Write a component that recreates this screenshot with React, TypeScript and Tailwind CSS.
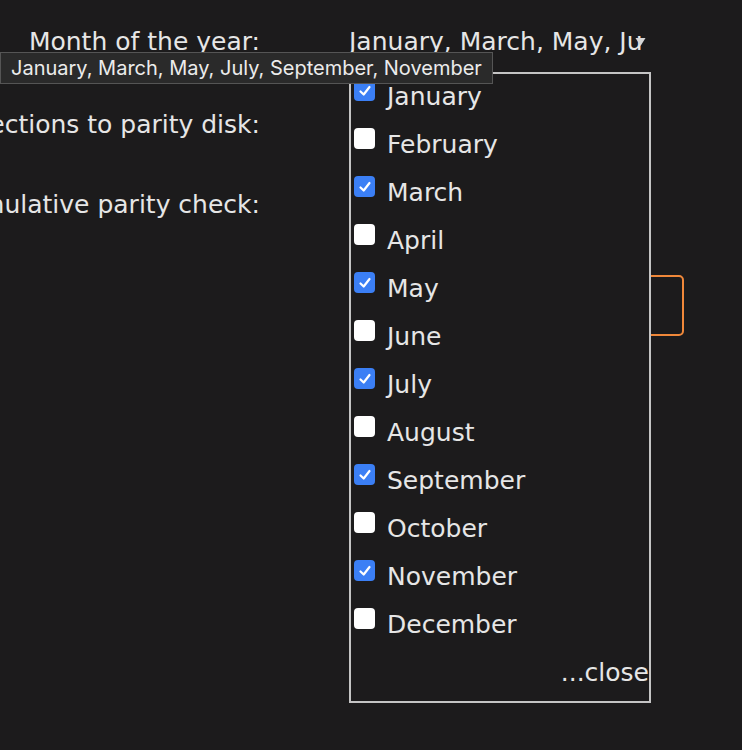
import React from 'react';

const months = [
  'January', 'February', 'March', 'April', 'May', 'June',
  'July', 'August', 'September', 'October', 'November', 'December',
];
const picked = ['January', 'March', 'May', 'July', 'September', 'November'];

const Check = ({ on }: { on: boolean }) =>
  on ? (
    <span className="w-[21px] h-[21px] rounded-[4px] bg-[#3b7ff5] flex items-center justify-center shrink-0">
      <svg width="14" height="14" viewBox="0 0 14 14">
        <path d="M2.5 7.5 L5.7 10.5 L11.5 3" stroke="white" strokeWidth="2.2" fill="none" strokeLinecap="round" strokeLinejoin="round" />
      </svg>
    </span>
  ) : (
    <span className="w-[21px] h-[21px] rounded-[4px] bg-white shrink-0" />
  );

const Label = ({ children }: { children: React.ReactNode }) => (
  <div className="w-[260px] shrink-0 flex justify-end whitespace-nowrap">
    <span>{children}</span>
  </div>
);

export default function App() {
  const summary = picked.join(', ');
  return (
    <div className="relative min-h-screen w-full overflow-hidden bg-[#1c1b1c] text-[#e6e6e6] text-[25px] leading-[32px] font-['DejaVu_Sans',sans-serif]">
      <div className="flex flex-col pt-[26px]">
        <div className="flex gap-[89px]">
          <Label>Month of the year:</Label>
          <div className="relative w-[300px]">
            <div className="w-[292px] overflow-hidden whitespace-nowrap">{summary}</div>
            <svg className="absolute right-[3px] top-[11px]" width="11" height="10" viewBox="0 0 11 10">
              <path d="M0.5 1 H10.5 L5.5 9 Z" fill="#d6d6d6" />
            </svg>

            {/* open month list */}
            <div className="absolute left-0 top-[46px] z-10 w-[302px] border-2 border-[#c4c4c4] bg-[#1c1b1c] pl-[3px] pt-[6px] pb-[13px]">
              {months.map(m => (
                <div key={m} className="flex h-[48px] items-start gap-[12px]">
                  <Check on={picked.includes(m)} />
                  <span className="leading-[30px] mt-[2px]">{m}</span>
                </div>
              ))}
              <div className="flex justify-end leading-[30px] mt-[2px]">...close</div>
            </div>
          </div>
        </div>

        <div className="flex gap-[89px] mt-[51px]">
          <Label>Write corrections to parity disk:</Label>
        </div>

        <div className="flex gap-[89px] mt-[48px]">
          <Label>Cumulative parity check:</Label>
        </div>

        <div className="flex gap-[89px] mt-[54px]">
          <div className="w-[260px] shrink-0" />
          <div className="w-[335px] h-[61px] rounded-[5px] border-2 border-[#f0883a]" />
        </div>
      </div>

      {/* native title tooltip */}
      <div className="absolute left-0 top-[52px] z-20 h-[32px] flex items-center px-[10px] bg-[#2a2a2a] border border-[#555] text-[#ececec] text-[20px] font-['Inter',sans-serif] whitespace-nowrap">
        {summary}
      </div>
    </div>
  );
}
